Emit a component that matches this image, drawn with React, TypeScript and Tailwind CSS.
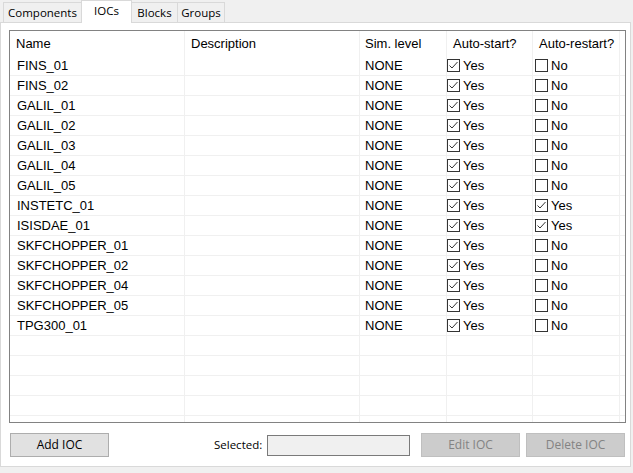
const rows: { name: string; start: boolean; restart: boolean }[] = [
  { name: "FINS_01", start: true, restart: false },
  { name: "FINS_02", start: true, restart: false },
  { name: "GALIL_01", start: true, restart: false },
  { name: "GALIL_02", start: true, restart: false },
  { name: "GALIL_03", start: true, restart: false },
  { name: "GALIL_04", start: true, restart: false },
  { name: "GALIL_05", start: true, restart: false },
  { name: "INSTETC_01", start: true, restart: true },
  { name: "ISISDAE_01", start: true, restart: true },
  { name: "SKFCHOPPER_01", start: true, restart: false },
  { name: "SKFCHOPPER_02", start: true, restart: false },
  { name: "SKFCHOPPER_04", start: true, restart: false },
  { name: "SKFCHOPPER_05", start: true, restart: false },
  { name: "TPG300_01", start: true, restart: false },
];

const cols = "grid grid-cols-[175px_175px_87px_86px_87px_1fr]";

function Check({ on }: { on: boolean }) {
  return (
    <span className="flex items-center gap-[3px]">
      <span className="w-[13px] h-[13px] border border-[#333] bg-white flex items-center justify-center">
        {on && (
          <svg width="11" height="11" viewBox="0 0 11 11">
            <path d="M1.5 5.5 L4 8 L9.5 2" fill="none" stroke="#333" strokeWidth="1" />
          </svg>
        )}
      </span>
      <span>{on ? "Yes" : "No"}</span>
    </span>
  );
}

function Row({ r }: { r?: (typeof rows)[number] }) {
  const cell = "h-[20px] border-r border-b border-[#f0f0f0] flex items-center";
  return (
    <div className={cols}>
      <div className={`${cell} pl-[7px]`}>{r?.name}</div>
      <div className={`${cell} pl-[6px]`}></div>
      <div className={`${cell} pl-[5px]`}>{r ? "NONE" : ""}</div>
      <div className={`${cell} pl-0`}>{r && <Check on={r.start} />}</div>
      <div className={`${cell} pl-[2px]`}>{r && <Check on={r.restart} />}</div>
      <div className="h-[20px] border-b border-[#f0f0f0]"></div>
    </div>
  );
}

export default function App() {
  const tab =
    "h-[20px] border border-[#d9d9d9] border-b-0 bg-[#f0f0f0] flex items-center justify-center -ml-px";
  return (
    <div
      className="w-[633px] h-[473px] bg-[#f0f0f0] text-[12px] text-black overflow-hidden"
      style={{ fontFamily: '"Open Sans", "Noto Sans", sans-serif' }}
    >
      {/* tabs */}
      <div className="h-[22px] flex items-end pl-[3px] relative z-10 text-[11.5px]">
        <div className={`${tab} ml-0 w-[79px]`}>Components</div>
        <div className="h-[23px] w-[51px] -ml-px -mb-px bg-white border border-[#d9d9d9] border-b-0 flex justify-center pt-[1px]">
          IOCs
        </div>
        <div className={`${tab} w-[47px]`}>Blocks</div>
        <div className={`${tab} w-[48px]`}>Groups</div>
      </div>

      {/* panel */}
      <div className="w-[631px] h-[445px] bg-white border border-[#d9d9d9] flex flex-col">
        <div
          className="mt-[7px] ml-[8px] w-[617px] h-[393px] border border-[#828282] overflow-hidden text-[13px]"
          style={{ fontFamily: '"Liberation Sans", Arial, sans-serif' }}
        >
          <div className={cols}>
            {["Name", "Description", "Sim. level", "Auto-start?", "Auto-restart?"].map((h, i) => (
              <div
                key={h}
                className={`h-[25px] pt-[1px] border-r border-[#f0f0f0] flex items-center ${i === 2 ? "pl-[5px]" : "pl-[6px]"}`}
              >
                {h}
              </div>
            ))}
            <div className="h-[25px]"></div>
          </div>
          {rows.map((r) => (
            <Row key={r.name} r={r} />
          ))}
          {[0, 1, 2, 3, 4].map((i) => (
            <Row key={i} />
          ))}
        </div>

        <div className="flex items-center mt-[10px] ml-[9px]">
          <button className="w-[99px] h-[24px] bg-[#e1e1e1] border border-[#adadad] flex items-center justify-center">
            Add IOC
          </button>
          <span className="ml-[105px] w-[53px] text-[11.5px]">Selected:</span>
          <div className="w-[143px] h-[21px] bg-[#f0f0f0] border border-[#7a7a7a]"></div>
          <button className="ml-[11px] w-[99px] h-[24px] bg-[#cccccc] border border-[#bfbfbf] text-[#838383] flex items-center justify-center">
            Edit IOC
          </button>
          <button className="ml-[6px] w-[99px] h-[24px] bg-[#cccccc] border border-[#bfbfbf] text-[#838383] flex items-center justify-center">
            Delete IOC
          </button>
        </div>
      </div>
    </div>
  );
}
